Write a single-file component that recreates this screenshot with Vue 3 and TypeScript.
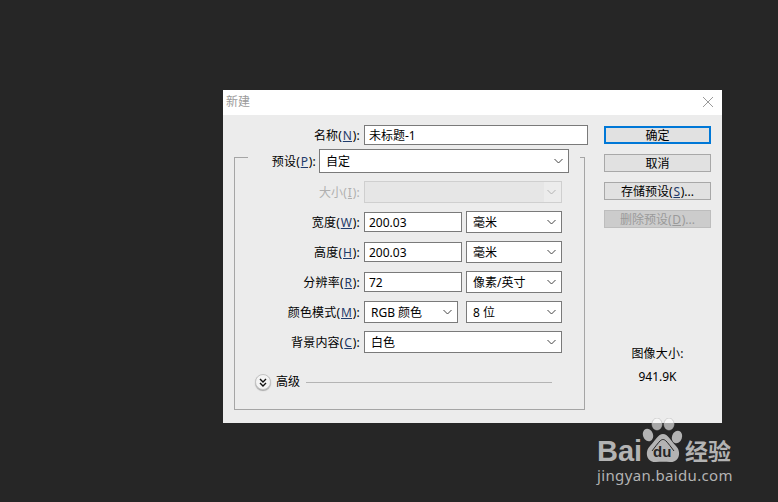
<script setup lang="ts">
const chevron = 'M.5 1 4.5 5 8.500 1'
</script>

<template>
  <main class="screen">
    <section class="dialog">
      <header class="titlebar">
        <span class="title">新建</span>
        <svg class="close" width="12" height="12" viewBox="0 0 12 12"><path d="M1 1 11 11M11 1 1 11" stroke="#9a9a9a" stroke-width="1" fill="none"/></svg>
      </header>
      <div class="content">
        <div class="left">
          <div class="name-row">
            <label class="lab name-lab">名称(<u>N</u>):</label>
            <div class="box name-box">未标题-1</div>
          </div>
          <div class="group">
            <div class="preset-row">
              <label class="lab preset-lab">预设(<u>P</u>):</label>
              <div class="box sel preset-box">
                <span>自定</span>
                <svg class="chev" width="9" height="6" viewBox="0 0 9 6"><path :d="chevron" stroke="#444" fill="none"/></svg>
              </div>
            </div>
            <div class="row">
              <label class="lab row-lab off">大小(<u>I</u>):</label>
              <div class="box sel wide disabled">
                <span class="fill"></span>
                <svg class="chev" width="9" height="6" viewBox="0 0 9 6"><path :d="chevron" stroke="#b4b4b4" fill="none"/></svg>
              </div>
            </div>
            <div class="row">
              <label class="lab row-lab">宽度(<u>W</u>):</label>
              <div class="box num">200.03</div>
              <div class="box sel unit"><span>毫米</span><svg class="chev" width="9" height="6" viewBox="0 0 9 6"><path :d="chevron" stroke="#444" fill="none"/></svg></div>
            </div>
            <div class="row">
              <label class="lab row-lab">高度(<u>H</u>):</label>
              <div class="box num">200.03</div>
              <div class="box sel unit"><span>毫米</span><svg class="chev" width="9" height="6" viewBox="0 0 9 6"><path :d="chevron" stroke="#444" fill="none"/></svg></div>
            </div>
            <div class="row">
              <label class="lab row-lab">分辨率(<u>R</u>):</label>
              <div class="box num">72</div>
              <div class="box sel unit"><span>像素/英寸</span><svg class="chev" width="9" height="6" viewBox="0 0 9 6"><path :d="chevron" stroke="#444" fill="none"/></svg></div>
            </div>
            <div class="row">
              <label class="lab row-lab">颜色模式(<u>M</u>):</label>
              <div class="box sel mode"><span>RGB 颜色</span><svg class="chev" width="9" height="6" viewBox="0 0 9 6"><path :d="chevron" stroke="#444" fill="none"/></svg></div>
              <div class="box sel unit bits"><span>8 位</span><svg class="chev" width="9" height="6" viewBox="0 0 9 6"><path :d="chevron" stroke="#444" fill="none"/></svg></div>
            </div>
            <div class="row">
              <label class="lab row-lab">背景内容(<u>C</u>):</label>
              <div class="box sel wide"><span>白色</span><svg class="chev" width="9" height="6" viewBox="0 0 9 6"><path :d="chevron" stroke="#444" fill="none"/></svg></div>
            </div>
            <div class="advanced">
              <span class="round">
                <svg width="8" height="9" viewBox="0 0 8 9"><path d="M1 1 4 4 7 1M1 5 4 8 7 5" stroke="#111" stroke-width="1.400" fill="none"/></svg>
              </span>
              <span class="adv-text">高级</span>
              <span class="rule"></span>
            </div>
          </div>
        </div>
        <aside class="side">
          <button class="btn primary">确定</button>
          <button class="btn">取消</button>
          <button class="btn">存储预设(<u>S</u>)...</button>
          <button class="btn dim">删除预设(<u>D</u>)...</button>
          <div class="size-title">图像大小:</div>
          <div class="size-value">941.9K</div>
        </aside>
      </div>
    </section>

    <div class="mark">
      <div class="mark-top">
        <span class="bai">Bai</span>
        <svg class="paw" width="42" height="46" viewBox="0 0 42 46">
          <ellipse cx="15" cy="6" rx="5" ry="6" fill="#fff" fill-opacity=".6" stroke="#bbb" stroke-width=".6"/>
          <ellipse cx="27" cy="6" rx="5" ry="6" fill="#fff" fill-opacity=".6" stroke="#bbb" stroke-width=".6"/>
          <ellipse cx="6" cy="17" rx="5" ry="6.500" transform="rotate(-20 6 17)" fill="#b3b3b3"/>
          <ellipse cx="35" cy="19" rx="5" ry="6.500" transform="rotate(20 35 19)" fill="#b3b3b3"/>
          <path d="M21 16C16 16 14 22 8 28 2 34 5 45 14 44 18 43.500 24 43.500 28 44 37 45 40 34 34 28 28 22 26 16 21 16Z" fill="#b3b3b3"/>
          <path d="M10 33C13 29 16 25 18 23 20 21 22 21 24 23 26 25 29 29 32 33" fill="none" stroke="#262626" stroke-width="1"/>
        </svg>
        <span class="du">du</span>
        <span class="jy">经验</span>
      </div>
      <div class="url">jingyan.baidu.com</div>
    </div>
  </main>
</template>

<style>
html, body { margin: 0; background: #262626; }
</style>

<style scoped>
.screen {
  position: relative;
  width: 778px;
  height: 502px;
  overflow: hidden;
  background: #262626;
  padding: 90px 0 0 223px;
  box-sizing: border-box;
  font: 12px/16px "Noto Sans", "Noto Sans CJK SC", sans-serif;
  color: #000;
}
.dialog {
  width: 499px;
  height: 333px;
  background: #ececec;
  display: flex;
  flex-direction: column;
}
.titlebar {
  height: 25px;
  flex: none;
  background: #fff;
  display: flex;
  align-items: center;
  justify-content: space-between;
  padding: 0 8px 0 3px;
}
.title { color: #9b9b9b; margin-top: -1px; }
.close { margin-top: -1px; }
.content { display: flex; flex: 1; }
.left { width: 363px; flex: none; }
.name-row { display: flex; align-items: center; margin-top: 10px; height: 20px; }
.lab { text-align: right; white-space: nowrap; flex: none; letter-spacing: .2px; padding-top: 2px; }
u { text-underline-offset: 1px; color: #1f3b6b; margin: 0 .7px; }
.name-lab { width: 137px; margin-right: 4px; }
.box {
  box-sizing: border-box;
  border: 1px solid #7a7a7a;
  background: #fff;
  display: flex;
  align-items: center;
  padding: 2px 0 0 4px;
  flex: none;
}
.name-box { width: 224px; height: 20px; }
.group {
  box-sizing: border-box;
  width: 351px;
  height: 253px;
  margin: 12px 0 0 11px;
  border: 1px solid #a5a5a5;
}
.preset-row {
  display: flex;
  align-items: center;
  height: 24px;
  margin: -9px 4px 0 13px;
  padding-right: 6px;
  background: #ececec;
}
.preset-lab { width: 68px; margin-right: 3px; }
.sel { justify-content: space-between; padding: 2px 5px 0 6px; }
.preset-box { width: 250px; height: 24px; }
.row { display: flex; align-items: center; height: 22px; margin-top: 8px; }
.row-lab { width: 125px; margin-right: 4px; }
.off { color: #b0b0b0; }
.off u { color: #b0b0b0; }
.wide { width: 198px; height: 22px; }
.disabled { border-color: #cfcfcf; background: #ececec; padding: 0 5px 0 0; }
.disabled .chev { margin-top: 0; }
.fill { display: block; width: 179px; height: 20px; background: #e6e6e6; }
.num { width: 98px; height: 20px; }
.unit { width: 96px; height: 22px; margin-left: 4px; }
.mode { width: 94px; height: 22px; }
.bits { margin-left: 8px; }
.chev { flex: none; margin-top: -2px; }
.advanced { display: flex; align-items: center; height: 16px; margin: 21px 0 0 20px; }
.round {
  box-sizing: border-box;
  width: 16px;
  height: 16px;
  border-radius: 50%;
  background: #f4f4f4;
  border: 1px solid #c4c4c4;
  box-shadow: 0 1px 1px #aaa;
  display: flex;
  align-items: center;
  justify-content: center;
}
.adv-text { margin-left: 5px; }
.rule { width: 246px; height: 1px; margin-left: 6px; background: #b4b4b4; }
.side {
  display: flex;
  flex-direction: column;
  align-items: stretch;
  width: 107px;
  margin: 11px 0 0 18px;
}
.btn {
  height: 18px;
  margin: 0 0 10px;
  padding: 2px 0 0;
  box-sizing: border-box;
  border: 1px solid #a8a8a8;
  background: #e1e1e1;
  font: inherit;
  line-height: 14px;
  color: #000;
}
.primary { border: 2px solid #0078d7; padding-top: 1px; }
.dim { background: #cccccc; border-color: #bdbdbd; color: #9a9a9a; }
.dim u { color: #9a9a9a; }
.size-title { margin-top: 108px; text-align: center; letter-spacing: .2px; }
.size-value { margin-top: 7px; text-align: center; }

.mark {
  position: absolute;
  left: 597px;
  top: 418px;
  width: 140px;
  color: #b3b3b3;
  pointer-events: none;
}
.mark-top { position: relative; height: 46px; }
.bai {
  position: absolute;
  left: 0;
  top: 17px;
  font: 700 29px/32px "Liberation Sans", sans-serif;
}
.paw { position: absolute; left: 45px; top: 0; }
.du {
  position: absolute;
  left: 56px;
  top: 25px;
  color: #262626;
  font: 700 15px/18px "Liberation Sans", sans-serif;
}
.jy {
  position: absolute;
  left: 88px;
  top: 19px;
  font: 700 23px/26px "Noto Sans CJK SC", sans-serif;
  white-space: nowrap;
}
.url {
  margin-top: 2px;
  font: 15px/18px "Noto Sans", sans-serif;
  letter-spacing: .35px;
  white-space: nowrap;
}
</style>
